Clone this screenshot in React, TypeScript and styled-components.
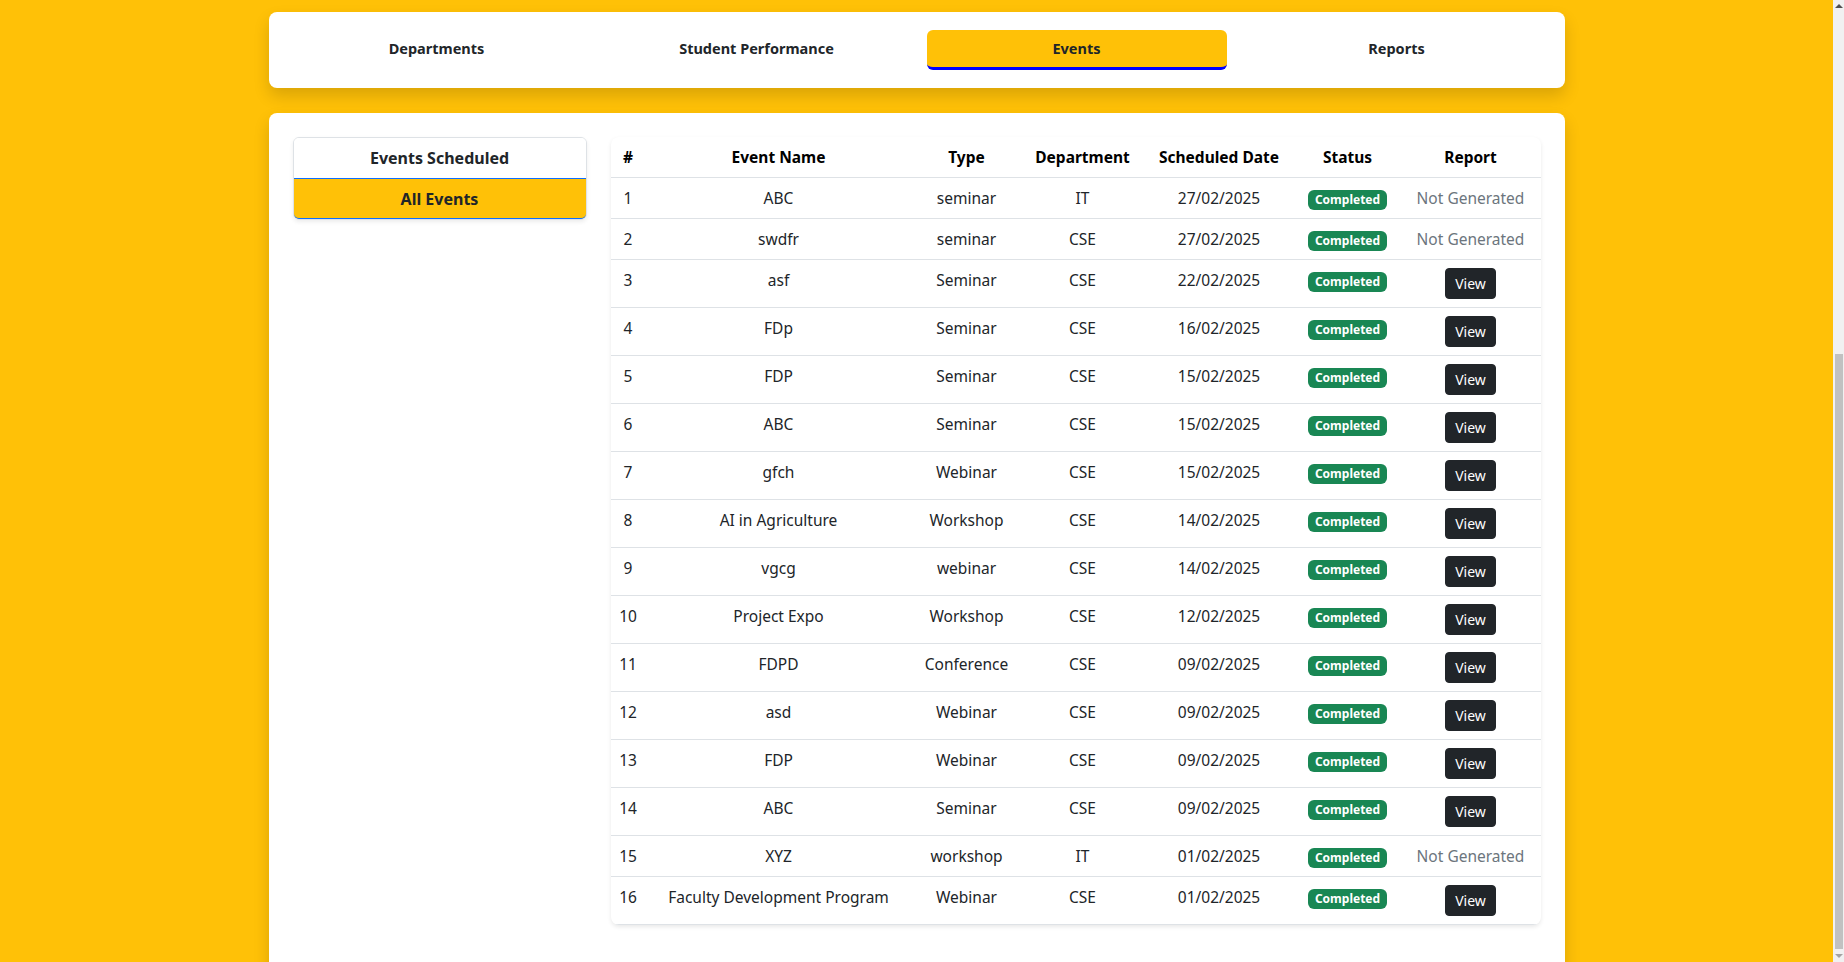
import React from "react";
import styled, { createGlobalStyle, css } from "styled-components";

const GlobalStyle = createGlobalStyle`
  html, body {
    margin: 0;
    padding: 0;
    background: #ffc107;
  }
  body {
    font-family: "Noto Sans", "Open Sans", sans-serif;
    color: #212529;
    font-size: 15.5px;
    line-height: 24px;
  }
  * { box-sizing: border-box; }
`;

const Page = styled.div`
  padding: 12px 11px 40px 0;
`;

const Container = styled.div`
  max-width: 1320px;
  margin: 0 auto;
  padding: 0 12px;
`;

const TabCard = styled.nav`
  display: flex;
  gap: 20px;
  padding: 18px;
  background: #fff;
  border-radius: 8px;
  box-shadow: 0 0.5rem 1rem rgba(0, 0, 0, 0.15);
`;

const Tab = styled.div<{ $active?: boolean }>`
  flex: 1;
  height: 40px;
  display: flex;
  align-items: center;
  justify-content: center;
  padding-bottom: 4px;
  font-size: 14.5px;
  font-weight: 700;
  color: #212529;
  border-radius: 6px;
  ${(p) =>
    p.$active &&
    css`
      background: #ffc107;
      border-bottom: 3px solid #0000ff;
      padding-bottom: 2px;
    `}
`;

const Panel = styled.section`
  margin-top: 25px;
  background: #fff;
  border-radius: 8px;
  padding: 24px 24px 60px;
  box-shadow: 0 0.5rem 1rem rgba(0, 0, 0, 0.15);
  display: grid;
  grid-template-columns: 294px 1fr;
  gap: 24px;
  align-items: start;
`;

const SideList = styled.div`
  border: 1px solid #dee2e6;
  border-radius: 6px;
  box-shadow: 0 0.125rem 0.25rem rgba(0, 0, 0, 0.075);
  overflow: hidden;
`;

const SideHeader = styled.div`
  height: 40px;
  display: flex;
  align-items: center;
  justify-content: center;
  font-weight: 700;
  font-size: 16px;
  color: #212529;
  background: #fff;
`;

const SideItem = styled.div<{ $active?: boolean }>`
  height: 42px;
  display: flex;
  align-items: center;
  justify-content: center;
  font-weight: 700;
  font-size: 16px;
  color: #212529;
  ${(p) =>
    p.$active &&
    css`
      background: #ffc107;
      border: 1px solid #0d6efd;
      border-bottom-width: 2px;
      border-radius: 0 0 6px 6px;
      margin: 0 -1px -1px;
    `}
`;

const TableWrap = styled.div`
  background: #fff;
  border-radius: 8px;
  box-shadow: 0 0.125rem 0.25rem rgba(0, 0, 0, 0.09);
  overflow: hidden;
`;

const Table = styled.table`
  width: 100%;
  table-layout: fixed;
  border-collapse: collapse;
  text-align: center;
  vertical-align: top;
`;

const Th = styled.th`
  padding: 8px 4px;
  font-weight: 700;
  color: #000;
  vertical-align: bottom;
  border-bottom: 1px solid #dee2e6;
  white-space: nowrap;
`;

const Td = styled.td`
  padding: 8px 4px;
  color: #212529;
  vertical-align: top;
  border-bottom: 1px solid #dee2e6;
  white-space: nowrap;
`;

const Badge = styled.span`
  display: inline-block;
  padding: 4px 7px;
  font-size: 12px;
  font-weight: 700;
  line-height: 1;
  color: #fff;
  background: #198754;
  border-radius: 6px;
  vertical-align: 0;
`;

const ViewButton = styled.button`
  font-family: inherit;
  font-size: 14px;
  line-height: 21px;
  padding: 4px 9px;
  color: #fff;
  background: #212529;
  border: 1px solid #212529;
  border-radius: 4px;
  cursor: pointer;
`;

const Muted = styled.span`
  color: #6c757d;
`;

/* Browser scrollbar as seen in the screenshot (page is scrolled) */
const ScrollTrack = styled.div`
  position: fixed;
  top: 0;
  right: 0;
  bottom: 0;
  width: 11px;
  background: #f1f1f1;
`;

const ScrollThumb = styled.div`
  position: absolute;
  left: 2px;
  right: 1px;
  top: 354px;
  bottom: 13px;
  background: #c1c1c1;
`;

const ScrollArrow = styled.div<{ $down?: boolean }>`
  position: absolute;
  left: 2px;
  width: 0;
  height: 0;
  border-left: 4px solid transparent;
  border-right: 4px solid transparent;
  ${(p) =>
    p.$down
      ? css`
          bottom: 4px;
          border-top: 4px solid #a3a3a3;
        `
      : css`
          top: 4px;
          border-bottom: 4px solid #505050;
        `}
`;

type Row = [string, string, string, string, boolean];

const rows: Row[] = [
  ["ABC", "seminar", "IT", "27/02/2025", false],
  ["swdfr", "seminar", "CSE", "27/02/2025", false],
  ["asf", "Seminar", "CSE", "22/02/2025", true],
  ["FDp", "Seminar", "CSE", "16/02/2025", true],
  ["FDP", "Seminar", "CSE", "15/02/2025", true],
  ["ABC", "Seminar", "CSE", "15/02/2025", true],
  ["gfch", "Webinar", "CSE", "15/02/2025", true],
  ["AI in Agriculture", "Workshop", "CSE", "14/02/2025", true],
  ["vgcg", "webinar", "CSE", "14/02/2025", true],
  ["Project Expo", "Workshop", "CSE", "12/02/2025", true],
  ["FDPD", "Conference", "CSE", "09/02/2025", true],
  ["asd", "Webinar", "CSE", "09/02/2025", true],
  ["FDP", "Webinar", "CSE", "09/02/2025", true],
  ["ABC", "Seminar", "CSE", "09/02/2025", true],
  ["XYZ", "workshop", "IT", "01/02/2025", false],
  ["Faculty Development Program", "Webinar", "CSE", "01/02/2025", true],
];

const colWidths = [35, 266, 110, 122, 151, 106, 140];

export default function App() {
  return (
    <>
      <GlobalStyle />
      <Page>
        <Container>
          <TabCard>
            <Tab>Departments</Tab>
            <Tab>Student Performance</Tab>
            <Tab $active>Events</Tab>
            <Tab>Reports</Tab>
          </TabCard>
          <Panel>
            <SideList>
              <SideHeader>Events Scheduled</SideHeader>
              <SideItem $active>All Events</SideItem>
            </SideList>
            <TableWrap>
              <Table>
                <colgroup>
                  {colWidths.map((w, i) => (
                    <col key={i} style={{ width: w }} />
                  ))}
                </colgroup>
                <thead>
                  <tr>
                    <Th>#</Th>
                    <Th>Event Name</Th>
                    <Th>Type</Th>
                    <Th>Department</Th>
                    <Th>Scheduled Date</Th>
                    <Th>Status</Th>
                    <Th>Report</Th>
                  </tr>
                </thead>
                <tbody>
                  {rows.map((r, i) => (
                    <tr key={i}>
                      <Td>{i + 1}</Td>
                      <Td>{r[0]}</Td>
                      <Td>{r[1]}</Td>
                      <Td>{r[2]}</Td>
                      <Td>{r[3]}</Td>
                      <Td>
                        <Badge>Completed</Badge>
                      </Td>
                      <Td>
                        {r[4] ? <ViewButton>View</ViewButton> : <Muted>Not Generated</Muted>}
                      </Td>
                    </tr>
                  ))}
                </tbody>
              </Table>
            </TableWrap>
          </Panel>
        </Container>
      </Page>
      <ScrollTrack aria-hidden>
        <ScrollArrow />
        <ScrollThumb />
        <ScrollArrow $down />
      </ScrollTrack>
    </>
  );
}
